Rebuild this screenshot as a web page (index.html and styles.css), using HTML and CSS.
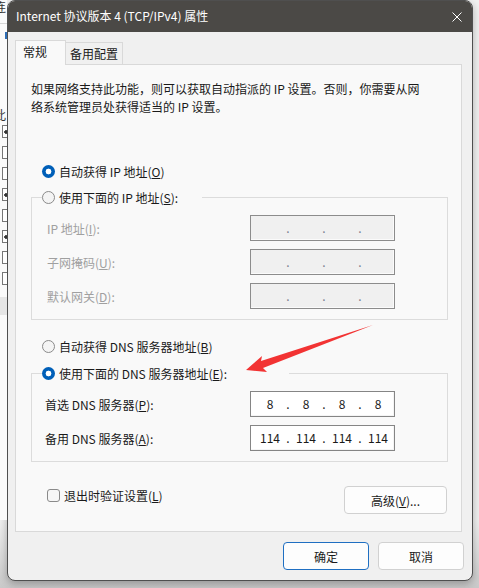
FILE: index.html
```html
<!doctype html>
<html lang="zh-CN">
  <head>
    <meta charset="UTF-8" />
    <meta name="viewport" content="width=device-width, initial-scale=1.0" />
    <title>Internet 协议版本 4 (TCP/IPv4) 属性</title>
    <link rel="stylesheet" href="styles.css">
  </head>
  <body>
    <div class="screen">
      <div class="behind">
        <span class="behind-char">连</span>
        <span class="behind-line"></span>
        <span class="behind-blue"></span>
        <span class="behind-char behind-char-low">此</span>
        <div class="behind-checks">
          <span class="mini-check on"></span>
          <span class="mini-check"></span>
          <span class="mini-check"></span>
          <span class="mini-check on"></span>
          <span class="mini-check"></span>
          <span class="mini-check on"></span>
          <span class="mini-check"></span>
          <span class="mini-check"></span>
        </div>
        <span class="behind-band"></span>
      </div>

      <div class="dialog">
        <div class="titlebar">
          <span class="title">Internet 协议版本 4 (TCP/IPv4) 属性</span>
          <svg class="close" width="10" height="10" viewBox="0 0 10 10">
            <path d="M0.5 0.5 L9.5 9.5 M9.5 0.5 L0.5 9.5" stroke="#ffffff" stroke-width="1" fill="none" />
          </svg>
        </div>

        <div class="body">
          <div class="tabs">
            <div class="tab active">常规</div>
            <div class="tab">备用配置</div>
          </div>

          <div class="panel">
            <p class="desc">如果网络支持此功能，则可以获取自动指派的 IP 设置。否则，你需要从网<br>络系统管理员处获得适当的 IP 设置。</p>

            <div class="radio-row first">
              <span class="radio checked"></span>自动获得 IP 地址(<u>O</u>)
            </div>

            <fieldset class="group">
              <legend class="legend-ip"><span class="radio"></span>使用下面的 IP 地址(<u>S</u>):</legend>
              <div class="fields">
                <div class="field disabled">
                  <span class="field-label">IP 地址(<u>I</u>):</span>
                  <div class="ip-box">
                    <span class="seg"></span><span class="dot">.</span><span class="seg"></span><span class="dot">.</span><span class="seg"></span><span class="dot">.</span><span class="seg"></span>
                  </div>
                </div>
                <div class="field disabled">
                  <span class="field-label">子网掩码(<u>U</u>):</span>
                  <div class="ip-box">
                    <span class="seg"></span><span class="dot">.</span><span class="seg"></span><span class="dot">.</span><span class="seg"></span><span class="dot">.</span><span class="seg"></span>
                  </div>
                </div>
                <div class="field disabled">
                  <span class="field-label">默认网关(<u>D</u>):</span>
                  <div class="ip-box">
                    <span class="seg"></span><span class="dot">.</span><span class="seg"></span><span class="dot">.</span><span class="seg"></span><span class="dot">.</span><span class="seg"></span>
                  </div>
                </div>
              </div>
            </fieldset>

            <div class="radio-row second">
              <span class="radio"></span>自动获得 DNS 服务器地址(<u>B</u>)
            </div>

            <fieldset class="group dns">
              <legend class="legend-dns"><span class="radio checked"></span>使用下面的 DNS 服务器地址(<u>E</u>):</legend>
              <div class="fields">
                <div class="field">
                  <span class="field-label">首选 DNS 服务器(<u>P</u>):</span>
                  <div class="ip-box">
                    <span class="seg">8</span><span class="dot">.</span><span class="seg">8</span><span class="dot">.</span><span class="seg">8</span><span class="dot">.</span><span class="seg">8</span>
                  </div>
                </div>
                <div class="field">
                  <span class="field-label">备用 DNS 服务器(<u>A</u>):</span>
                  <div class="ip-box">
                    <span class="seg">114</span><span class="dot">.</span><span class="seg">114</span><span class="dot">.</span><span class="seg">114</span><span class="dot">.</span><span class="seg">114</span>
                  </div>
                </div>
              </div>
            </fieldset>

            <div class="options">
              <div class="check-row"><span class="checkbox"></span>退出时验证设置(<u>L</u>)</div>
              <button class="btn advanced">高级(<u>V</u>)...</button>
            </div>
          </div>

          <div class="buttons">
            <button class="btn primary">确定</button>
            <button class="btn">取消</button>
          </div>
        </div>
      </div>

      <svg class="arrow" width="479" height="588" viewBox="0 0 479 588">
        <polygon points="246,370 262,356 261,361 373,325 263,368 267,372" fill="#f23333" />
      </svg>
    </div>
  </body>
</html>
```

FILE: styles.css
```css
* {
  box-sizing: border-box;
}

body {
  margin: 0;
  font-family: "Noto Sans CJK SC", "Noto Sans", sans-serif;
  font-size: 12px;
  color: #1a1a1a;
}

.screen {
  position: relative;
  display: flex;
  width: 479px;
  height: 588px;
  overflow: hidden;
  background: linear-gradient(#f1f1f1 0, #f1f1f1 520px, #c9c9c9 588px);
}

/* window behind the dialog, only a sliver shows */
.behind {
  position: relative;
  width: 7px;
  height: 520px;
  flex-shrink: 0;
  background: #fafafa;
  overflow: hidden;
  display: flex;
  flex-direction: column;
  align-items: flex-end;
}

.behind-char {
  margin-top: 1px;
  margin-right: 1px;
  line-height: 12px;
  color: #333;
}

.behind-char-low {
  margin-top: 70px;
}

.behind-line {
  width: 7px;
  height: 1px;
  margin-top: 10px;
  background: #d6d6d6;
}

.behind-blue {
  width: 2px;
  height: 7px;
  margin-top: 8px;
  background: #2d6db5;
}

.behind-checks {
  display: flex;
  flex-direction: column;
  gap: 8px;
  margin-top: 4px;
}

.mini-check {
  width: 13px;
  height: 13px;
  margin-right: -8px;
  border: 1px solid #777;
  background: #fff;
}

.mini-check.on {
  background: radial-gradient(circle at 3px 6px, #333 1.5px, #fff 2px);
}

.behind-band {
  width: 7px;
  height: 18px;
  margin-top: 12px;
  background: #e6e6e6;
}

.dialog {
  width: 466px;
  height: 581px;
  flex-shrink: 0;
  border: 1px solid #4f4f4f;
  border-radius: 8px;
  background: #f0f0f0;
  overflow: hidden;
  box-shadow: 0 3px 8px rgba(0, 0, 0, 0.28);
}

.titlebar {
  display: flex;
  align-items: center;
  justify-content: space-between;
  height: 31px;
  padding: 0 10px 1px 8px;
  background: #4b4946;
  color: #fff;
}

.title {
  line-height: 18px;
}

.close {
  margin-top: 1px;
}

.body {
  padding: 8px 7px 0 7px;
}

.tabs {
  display: flex;
  align-items: flex-end;
  height: 24px;
}

.tab {
  height: 22px;
  width: 57px;
  line-height: 21px;
  text-align: center;
  border: 1px solid #d9d9d9;
  border-left: none;
  border-bottom: none;
  background: #f0f0f0;
}

.tab.active {
  position: relative;
  z-index: 1;
  width: 51px;
  height: 25px;
  margin-bottom: -1px;
  padding-left: 7px;
  line-height: 22px;
  text-align: left;
  border-left: 1px solid #d9d9d9;
  background: #f9f9f9;
}

.panel {
  width: 447px;
  height: 468px;
  border: 1px solid #d9d9d9;
  background: #f9f9f9;
  padding-top: 15px;
}

.desc {
  margin: 0 0 0 15px;
  line-height: 18px;
  white-space: nowrap;
}

.radio-row {
  display: flex;
  align-items: center;
  height: 18px;
  margin-left: 26px;
}

.radio-row.first {
  margin-top: 46px;
}

.radio-row.second {
  margin-top: 17px;
}

.radio {
  display: inline-block;
  width: 13px;
  height: 13px;
  margin-right: 4px;
  border: 1px solid #8a8a8a;
  border-radius: 50%;
  background: #f4f4f4;
  flex-shrink: 0;
}

.radio.checked {
  border: none;
  background: radial-gradient(circle, #ffffff 0, #ffffff 2.6px, #005fb8 3.2px);
}

.group {
  min-width: 0;
  width: 417px;
  margin: 8px 0 0 15px;
  padding: 0 0 10px 10px;
  border: 1px solid #dcdcdc;
}

.group.dns {
  margin-top: 9px;
}

legend {
  display: flex;
  align-items: center;
  height: 18px;
  padding: 0;
}

.legend-ip {
  width: 160px;
}

.legend-dns {
  width: 247px;
}

.fields {
  display: flex;
  flex-direction: column;
  gap: 8px;
  padding-top: 9px;
}

.field {
  display: grid;
  grid-template-columns: 208px 145px;
  align-items: center;
}

.field-label {
  padding-left: 3px;
}

.field.disabled .field-label {
  padding-left: 5px;
  color: #a0a0a0;
}

.ip-box {
  display: flex;
  height: 26px;
  padding-left: 3px;
  line-height: 24px;
  border: 1px solid #858585;
  background: #fff;
  box-shadow: inset -1px -1px 0 #f4f4f4;
}

.field.disabled .ip-box {
  background: #f0f0f0;
  border-color: #8c8c8c;
  box-shadow: inset -1px -1px 0 #fbfbfb;
  color: #7a7f8f;
}

.seg {
  width: 32px;
  text-align: center;
}

.dot {
  width: 4px;
  text-align: center;
}

.options {
  display: flex;
  justify-content: space-between;
  align-items: flex-start;
  margin: 24px 14px 0 31px;
}

.check-row {
  display: flex;
  align-items: center;
  height: 18px;
}

.checkbox {
  width: 13px;
  height: 13px;
  margin-right: 4px;
  border: 1px solid #8a8a8a;
  border-radius: 3px;
  background: #f6f6f6;
}

.btn {
  width: 86px;
  height: 28px;
  padding: 0;
  font-family: inherit;
  font-size: 12px;
  color: #1a1a1a;
  border: 1px solid #d1d1d1;
  border-radius: 4px;
  background: #fdfdfd;
}

.btn.advanced {
  width: 103px;
}

.btn.primary {
  border-color: #1f6fc2;
}

.buttons {
  display: flex;
  justify-content: flex-end;
  gap: 9px;
  margin: 10px 1px 0 0;
}

.arrow {
  position: absolute;
  left: 0;
  top: 0;
  pointer-events: none;
}
```
